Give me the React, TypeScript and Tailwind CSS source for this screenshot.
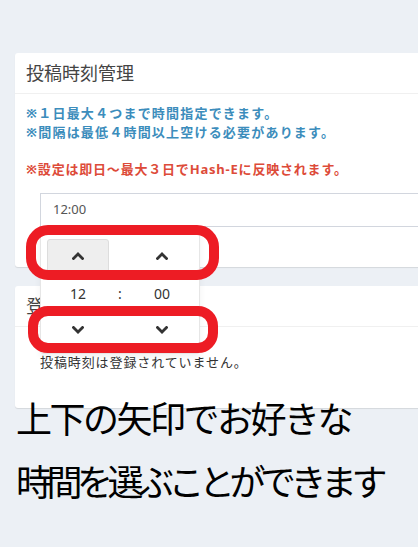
import type { ReactNode } from 'react';

// Post-time settings screen with the time picker open, plus the red callouts
// and caption that were drawn over the screenshot.

function Chevron({ up }: { up?: boolean }) {
  return (
    <svg viewBox="0 0 12 8" className="h-[8px] w-[12px] text-[#333]" aria-hidden="true">
      <polyline
        points={up ? '1.5,6.5 6,2 10.5,6.5' : '1.5,1.5 6,6 10.5,1.5'}
        fill="none"
        stroke="currentColor"
        strokeWidth="2.8"
        strokeLinecap="square"
      />
    </svg>
  );
}

function PickerButton({ up, active }: { up?: boolean; active?: boolean }) {
  return (
    <div
      className={
        active
          ? 'flex h-[34px] w-[62px] items-center justify-center rounded-[3px] border border-[#ddd] bg-[#eee]'
          : 'flex h-[34px] w-[62px] items-center justify-center'
      }
    >
      <Chevron up={up} />
    </div>
  );
}

function Box({ title, children }: { title: string; children: ReactNode }) {
  return (
    <div className="w-[420px] rounded-[3px] bg-white shadow-[0_1px_1px_rgba(0,0,0,0.1)]">
      <div className="flex h-[41px] items-center border-b border-[#f0f0f0] px-[11px] text-[18px] text-[#444]">
        {title}
      </div>
      {children}
    </div>
  );
}

export default function App() {
  return (
    <div className="relative h-[547px] w-[418px] overflow-hidden bg-[#ecf0f5] font-['Noto_Sans','Noto_Sans_CJK_JP',sans-serif]">
      <div className="flex flex-col gap-[19px] pl-[15px] pt-[53px]">
        <Box title="投稿時刻管理">
          <div className="px-[11px] pb-[40px] pt-[10px]">
            <p className="text-[13px] font-bold leading-[19px] tracking-[1.2px] text-[#3c8dbc]">
              ※１日最大４つまで時間指定できます。
              <br />
              ※間隔は最低４時間以上空ける必要があります。
            </p>
            <p className="mt-[18px] text-[13px] font-bold leading-[19px] tracking-[0.8px] text-[#dd4b39]">
              ※設定は即日～最大３日でHash-Eに反映されます。
            </p>
            <div className="ml-[14px] mt-[14px] flex h-[34px] items-center border border-[#d2d6de] px-[12px] text-[13px] text-[#555]">
              12:00
            </div>
          </div>
        </Box>

        <Box title="登録時刻一覧">
          <div className="px-[25px] pb-[36px] pt-[26px] text-[13px] leading-[19px] tracking-[0.9px] text-[#333]">
            投稿時刻は登録されていません。
          </div>
        </Box>
      </div>

      {/* open time picker dropdown */}
      <div className="absolute left-[40px] top-[232px] w-[160px] rounded-b-[3px] border border-[#e6e6e6] bg-white p-[6px] shadow-[0_3px_6px_rgba(0,0,0,0.06)]">
        <div className="grid grid-cols-[62px_22px_62px] justify-center">
          <PickerButton up active />
          <div />
          <PickerButton up />
          <div className="flex h-[40px] items-center justify-center text-[14px] text-[#333]">12</div>
          <div className="flex h-[40px] items-center justify-center text-[14px] text-[#333]">:</div>
          <div className="flex h-[40px] items-center justify-center text-[14px] text-[#333]">00</div>
          <PickerButton />
          <div />
          <PickerButton />
        </div>
      </div>

      {/* red callouts */}
      <div className="absolute left-[26px] top-[225px] h-[55px] w-[193px] rounded-[22px] border-[10px] border-[#ed1c24]" />
      <div className="absolute left-[28px] top-[306px] h-[47px] w-[190px] rounded-[20px] border-[10px] border-[#ed1c24]" />

      {/* caption */}
      <div className="absolute left-[16px] top-[386px] whitespace-nowrap font-['Noto_Sans_CJK_JP',sans-serif] text-[36px] leading-[63px] text-black">
        <p className="tracking-[-2.5px]">上下の矢印でお好きな</p>
        <p className="tracking-[-5.5px]">時間を選ぶことができます</p>
      </div>
    </div>
  );
}
